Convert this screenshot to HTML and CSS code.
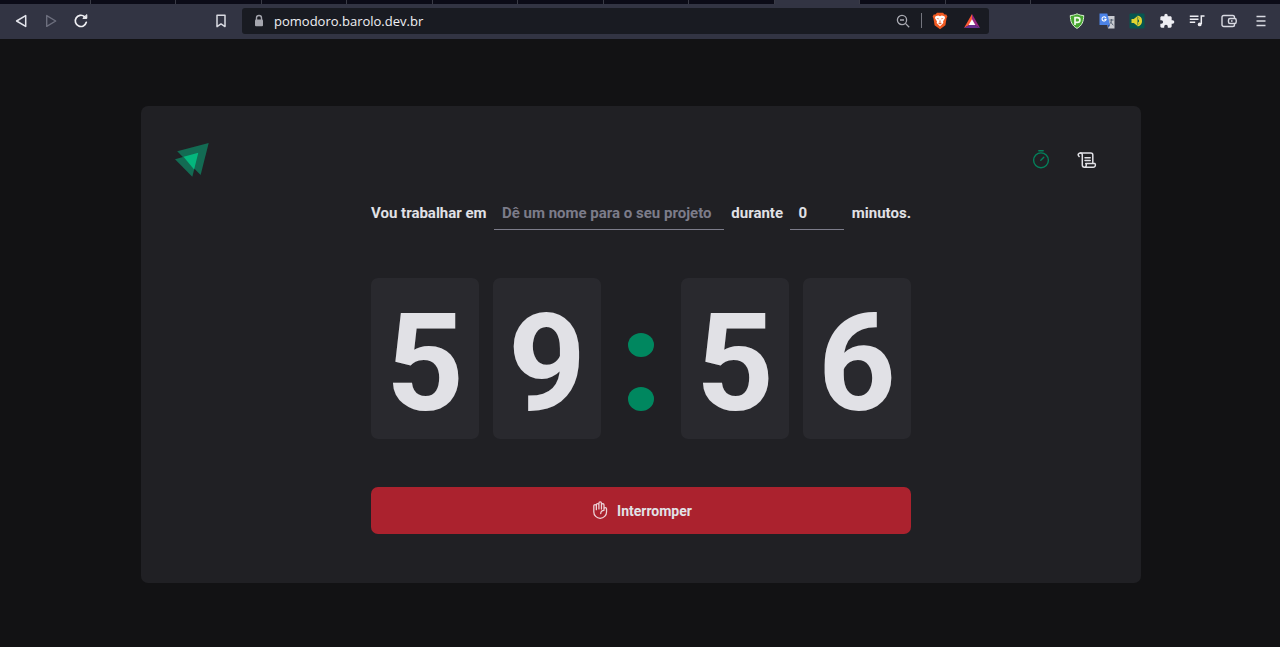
FILE: index.html
```html
<!DOCTYPE html>
<html lang="pt-BR">
<head>
<meta charset="utf-8">
<title>Ignite Timer</title>
<link rel="stylesheet" href="styles.css">
</head>
<body>
<div class="browser">
  <div class="tabs">
    <span class="tab tab-first"></span><span class="tab"></span><span class="tab"></span><span class="tab"></span><span class="tab"></span><span class="tab"></span><span class="tab"></span><span class="tab"></span><span class="tab"></span><span class="tab tab-active"></span><span class="tab"></span><span class="tab"></span>
  </div>
  <div class="toolbar">
    <div class="nav-buttons">
      <button class="tool" aria-label="Voltar"><svg width="16" height="16" viewBox="0 0 16 16" fill="none" stroke="#e4e5ec" stroke-width="1.5" stroke-linejoin="round"><path d="M12.7 2.6v10.8L3.600 8z"/></svg></button>
      <button class="tool" aria-label="Avançar"><svg width="16" height="16" viewBox="0 0 16 16" fill="none" stroke="#6d6f7e" stroke-width="1.4" stroke-linejoin="round"><path d="M3.7 2.6v10.8L12.700 8z"/></svg></button>
      <button class="tool" aria-label="Recarregar"><svg width="16" height="16" viewBox="0 0 16 16" fill="none" stroke="#f0f0f4" stroke-width="1.7" stroke-linecap="round"><path d="M13.3 9.3A5.6 5.6 0 1 1 11.5 3.6"/><path d="M10.2 5.4h3.6V2z" fill="#f0f0f4" stroke-width="1" stroke-linejoin="round"/></svg></button>
    </div>
    <button class="tool bookmark" aria-label="Favorito"><svg width="16" height="16" viewBox="0 0 16 16" fill="none" stroke="#d9dae2" stroke-width="1.5" stroke-linejoin="round"><path d="M4 2.2h8v11.4L8 10.9l-4 2.7z"/></svg></button>
    <div class="address">
      <svg class="lock" width="12" height="14" viewBox="0 0 12 14"><path d="M3.5 6V4a2.5 2.5 0 0 1 5 0v2" fill="none" stroke="#a5a6ae" stroke-width="1.4"/><rect x="2" y="5.6" width="8" height="6.6" rx="1" fill="#a5a6ae"/></svg>
      <input class="url" type="text" aria-label="Endereço" value="pomodoro.barolo.dev.br">
      <button class="tool" aria-label="Zoom"><svg width="16" height="16" viewBox="0 0 16 16" fill="none" stroke="#a9aab2" stroke-width="1.3"><circle cx="7" cy="7" r="4.6"/><path d="M10.4 10.4l3.8 3.8M5 7h4"/></svg></button>
      <span class="divider"></span>
      <button class="tool" aria-label="Brave Shields"><svg width="16" height="18" viewBox="0 0 16 18"><path d="M5 .8h6l1.6 1.6 1.7.1 1.1 2.3-.8 1.3-1.2 7.1L8 17.2l-5.4-4L1.4 6.1.6 4.8l1.100-2.300 1.700-.1z" fill="#f15a22"/><path d="M3.6 4.3l2.6-.7 1.8.6 1.8-.6 2.6.7.7 1.6-2 3.3.2 1.7L8 14.2l-3.3-3.3.2-1.7-2-3.3z" fill="#fff"/><path d="M4.5 6.1l2.3.5-.5 1zM11.5 6.1l-2.3.5.5 1zM8 7.2l.6 2.5-.6.6-.6-.6zM6 11l2-.6 2 .6-2 1.5z" fill="#f15a22"/></svg></button>
      <button class="tool bat" aria-label="Brave Rewards"><svg width="18" height="16" viewBox="0 0 18 16"><path d="M9 1L1 15l8-4.600z" fill="#ff5a35"/><path d="M9 1l8 14-8-4.600z" fill="#9a2783"/><path d="M1 15h16l-8-4.700z" fill="#68308f"/><path d="M9 6.200l3.300 5.800H5.700z" fill="#fff"/></svg></button>
    </div>
    <div class="extensions">
      <button class="tool" aria-label="Extensão de proteção"><svg width="16" height="16" viewBox="0 0 16 16"><path d="M8 .8c2.300 1.200 4.400 1.600 6.700 1.700 0 5.600-1.600 10.200-6.700 12.900C2.900 12.700 1.300 8.100 1.300 2.500 3.600 2.400 5.700 2 8 .8z" fill="#46a72f" stroke="#d7f0cf"/><path d="M6 12V4.600h2.500a2.400 2.400 0 0 1 0 4.800H6" fill="none" stroke="#effbe9" stroke-width="1.7"/></svg></button>
      <button class="tool" aria-label="Tradutor"><svg width="16" height="16" viewBox="0 0 16 16"><path d="M7 3h8.500v12.500H9z" fill="#c9cbd1"/><path d="M.5.5h7.800l2.700 11.500H.5z" fill="#4c83e8"/><path d="M8.600 12H11l-1.500 3z" fill="#3157a8"/><path d="M7 4.900A2.100 2.100 0 1 0 7.200 6.400H5.300" fill="none" stroke="#fff" stroke-width="1.1"/><path d="M10.500 7h4M12.500 6v1c0 2-.8 3.300-2 4.200M11.300 8.600l3 3.700" fill="none" stroke="#566171"/></svg></button>
      <button class="tool" aria-label="Volume"><svg width="16" height="16" viewBox="0 0 16 16"><rect x=".5" y=".5" width="15" height="15" rx="1" fill="#07564f"/><path d="M2.500 6h2.300L8.500 3v10L4.800 10H2.500z" fill="#e1d331"/><path d="M9 5.500a2.600 2.600 0 0 1 0 5M8.500 3.400a4.700 4.700 0 0 1 0 9.200" fill="none" stroke="#e1d331" stroke-width="1.6"/></svg></button>
      <button class="tool" aria-label="Extensões"><svg width="16" height="16" viewBox="0 0 24 24" fill="#eeeef3"><path d="M20.500 11H19V7c0-1.100-.9-2-2-2h-4V3.500a2.500 2.500 0 0 0-5 0V5H4c-1.100 0-2 .9-2 2v3.800h1.500a2.700 2.700 0 0 1 0 5.400H2V20c0 1.100.9 2 2 2h3.800v-1.500a2.700 2.700 0 0 1 5.400 0V22H17c1.100 0 2-.9 2-2v-4h1.500a2.500 2.500 0 0 0 0-5z"/></svg></button>
      <button class="tool" aria-label="Mídia"><svg width="16" height="16" viewBox="0 0 16 16" fill="none" stroke="#eeeef3" stroke-width="1.5"><path d="M.8 3.300h8.700M.8 6.300h8.700M.8 9.300h5.400M12.300 11V3h3.200"/><circle cx="10.700" cy="11.400" r="1.900" fill="#eeeef3" stroke="none"/></svg></button>
      <button class="tool spaced" aria-label="Carteira"><svg width="16" height="16" viewBox="0 0 16 16" fill="none" stroke="#d9dae2" stroke-width="1.4"><rect x="1" y="2.500" width="12.500" height="11" rx="1.800"/><rect x="7.500" y="5.500" width="7.700" height="5" rx="1.500" fill="#323443"/><path d="M10 8h1.600"/></svg></button>
      <button class="tool spaced" aria-label="Menu"><svg width="16" height="16" viewBox="0 0 16 16" fill="none" stroke="#d9dae2" stroke-width="1.4"><path d="M3.500 3.500h9M3.500 8h9M3.500 12.500h9"/></svg></button>
    </div>
  </div>
</div>

<main class="page">
  <section class="card">
    <header class="header">
      <svg class="logo" width="36" height="36" viewBox="0 0 36 36" role="img" aria-label="Logo"><path d="M2.200 9.200L33.700 1 25.600 33z" fill="#136b53"/><path d="M0 17.200l23.300-6.400-6 24z" fill="#136b53"/><path d="M8.500 14.800l14.800-4-4.200 16.600z" fill="#04b67d"/></svg>
      <nav class="nav">
        <a class="nav-link" href="#timer" title="Timer"><svg width="20" height="20" viewBox="0 0 20 20" fill="none" stroke="#04805b" stroke-width="1.4" stroke-linecap="round"><circle cx="10" cy="10.300" r="7.400"/><path d="M7.800 .8h4.400M9.800 10.300l3-3"/></svg></a>
        <a class="nav-link" href="#history" title="Histórico"><svg width="20" height="20" viewBox="0 0 20 20" fill="none" stroke="#e1e1e6" stroke-width="1.5" stroke-linecap="round" stroke-linejoin="round"><path d="M2.100 6.500C.3 4.800 1.500 3 3.300 3h10.500c1.200 0 2 .8 2 2v8"/><path d="M3.300 3c1.300 0 2 .8 2 2v10c0 1.400.9 2.200 2.100 2.200h9c1.700 0 2.700-2 1.500-3.800H8.700c1.300 1.700.4 3.800-1.300 3.800M8 7.800h5.200M8 10.500h5.200"/></svg></a>
      </nav>
    </header>

    <form class="timer" id="timer">
      <div class="task-row">
        <label for="task">Vou trabalhar em</label>
        <input class="field task" id="task" type="text" placeholder="Dê um nome para o seu projeto">
        <label for="minutes">durante</label>
        <input class="field minutes" id="minutes" type="text" inputmode="numeric" value="0">
        <span>minutos.</span>
      </div>
      <div class="countdown">
        <span class="digit">5</span>
        <span class="digit">9</span>
        <div class="separator"><span class="dot"></span><span class="dot"></span></div>
        <span class="digit">5</span>
        <span class="digit">6</span>
      </div>
      <button class="stop" type="button">
        <svg width="20" height="20" viewBox="-1 0 22 22" fill="none" stroke="#eed3d8" stroke-width="1.4" stroke-linecap="round" stroke-linejoin="round"><path d="M6 9.500V4.200a1.400 1.400 0 0 1 2.800 0V2.400a1.400 1.400 0 0 1 2.800 0v1.900a1.400 1.400 0 0 1 2.800 0v4.500a1.400 1.400 0 0 1 2.800 0V12a7 7 0 0 1-14 0V5.300a1.400 1.400 0 0 1 2.800 0M8.800 4.200v4.500M11.600 4.300v4.500M14.400 8.800v1.500a3.600 3.600 0 0 0-3.600 3.500"/></svg>
        Interromper
      </button>
    </form>
  </section>
</main>
</body>
</html>
```
FILE: styles.css
```css
* {
  box-sizing: border-box;
}

body {
  margin: 0;
  min-height: 100vh;
  display: flex;
  flex-direction: column;
  background: #121214;
  color: #e1e1e6;
  font-family: Roboto, sans-serif;
}

button,
input {
  font: inherit;
  color: inherit;
  border: 0;
  padding: 0;
  background: transparent;
}

button {
  cursor: pointer;
}

svg {
  display: block;
  flex-shrink: 0;
}

.tabs {
  display: flex;
  height: 4px;
  background: #0b0b17;
  overflow: hidden;
}

.tab {
  flex: 0 0 auto;
  width: 86px;
  border-right: 1px solid #3a3b46;
}

.tab:nth-child(even) {
  width: 85px;
}

.tab-first {
  width: 91px;
}

.tab-active {
  background: #323443;
}

.toolbar {
  display: flex;
  align-items: center;
  height: 35px;
  padding: 0 11px 2px 13px;
  background: #323443;
}

.tool {
  display: flex;
  align-items: center;
  justify-content: center;
}

.nav-buttons {
  display: flex;
  gap: 14px;
}

.bookmark {
  margin-left: 124px;
}

.address {
  display: flex;
  flex: 1;
  align-items: center;
  height: 26px;
  margin: 0 80px 0 13px;
  padding: 0 8px 0 11px;
  border-radius: 3px;
  background: #191b22;
}

.url {
  flex: 1;
  min-width: 0;
  margin-left: 9px;
  font-family: "Open Sans", "Noto Sans", sans-serif;
  font-size: 13px;
  color: #f0f0f4;
}

.divider {
  width: 1px;
  height: 15px;
  margin: 0 10px;
  background: #74757e;
}

.bat {
  margin-left: 15px;
}

.extensions {
  display: flex;
  gap: 14px;
}

.spaced {
  margin-left: 2px;
}

.page {
  display: flex;
  flex: 1;
  padding: 67px 64px 64px 66px;
}

.card {
  flex: 1;
  max-width: 1000px;
  margin: 0 auto;
  padding: 34px;
  border-radius: 7px;
  background: #202024;
}

.header {
  display: flex;
  align-items: center;
  justify-content: space-between;
  height: 40px;
}

.nav {
  display: flex;
  gap: 6px;
}

.nav-link {
  display: flex;
  align-items: center;
  justify-content: center;
  width: 40px;
  height: 40px;
}

.timer {
  display: flex;
  flex-direction: column;
  gap: 48px;
  width: 540px;
  max-width: 100%;
  margin: 16px auto 0;
}

.task-row {
  display: flex;
  align-items: center;
  justify-content: space-between;
  font-size: 15px;
  font-weight: 700;
  white-space: nowrap;
}

.field {
  height: 34px;
  padding: 0 8px;
  border-bottom: 1px solid #7c7c8a;
}

.field::placeholder {
  color: #7c7c8a;
  opacity: 1;
}

.task {
  width: 230px;
}

.minutes {
  width: 54px;
}

.countdown {
  display: flex;
  gap: 14px;
}

.digit {
  flex: 1;
  padding-top: 10px;
  border-radius: 7px;
  background: #29292e;
  font-size: 136px;
  font-weight: 700;
  line-height: 151px;
  text-align: center;
}

.separator {
  display: flex;
  flex-direction: column;
  align-items: center;
  gap: 30px;
  width: 52px;
  padding-top: 55px;
}

.dot {
  width: 26px;
  height: 24px;
  border-radius: 50%;
  background: #00875f;
}

.stop {
  display: flex;
  align-items: center;
  justify-content: center;
  gap: 7px;
  height: 47px;
  border-radius: 7px;
  background: #ab222e;
  font-size: 14px;
  font-weight: 700;
}
```
